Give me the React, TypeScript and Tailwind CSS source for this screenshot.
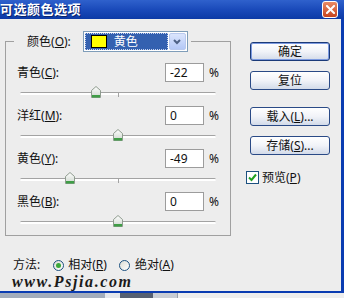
import React from "react";

type Row = { label: string; key: string; value: number };

const rows: Row[] = [
  { label: "青色", key: "C", value: -22 },
  { label: "洋红", key: "M", value: 0 },
  { label: "黄色", key: "Y", value: -49 },
  { label: "黑色", key: "B", value: 0 },
];

const font = "font-['Noto_Sans','Noto_Sans_CJK_SC',sans-serif]";

function Thumb() {
  return (
    <svg width="10" height="12" viewBox="0 0 10 12">
      <defs>
        <linearGradient id="thumbfill" x1="0" y1="0" x2="0" y2="1">
          <stop offset="0" stopColor="#ffffff" />
          <stop offset="1" stopColor="#cdd6cd" />
        </linearGradient>
      </defs>
      <path d="M5 0.5 L9.5 4.5 V11.5 H0.5 V4.5 Z" fill="url(#thumbfill)" stroke="#8f9c8f" />
      <rect x="1" y="9" width="8" height="2.5" fill="#3f9d46" />
    </svg>
  );
}

function Slider({ value }: { value: number }) {
  // track is 196px wide, -100..100 maps across it
  const left = 98 + (value / 100) * 98;
  return (
    <div className="relative h-[24px] ml-[3px] w-[196px] pt-[10px]">
      <div className="h-[3px] rounded-full border-t border-[#a3a3a3] bg-white" />
      <div className="absolute top-[11px] left-[98px] h-[4px] w-px bg-[#a3a3a3]" />
      <div className="absolute top-[4px]" style={{ left: Math.round(left - 5) }}>
        <Thumb />
      </div>
    </div>
  );
}

function Label({ text, k }: { text: string; k: string }) {
  return (
    <span>
      {text}(<span className="underline">{k}</span>):
    </span>
  );
}

function XpButton({ children, primary }: { children: React.ReactNode; primary?: boolean }) {
  return (
    <div
      className={`w-[80px] h-[19px] flex items-center justify-center rounded-[3px] border bg-gradient-to-b from-white via-[#f1f3f8] to-[#d3dbe9] ${
        primary
          ? "border-[#1b3a78] shadow-[inset_0_0_0_1px_#7c9ae0]"
          : "border-[#2a4a86]"
      }`}
    >
      {children}
    </div>
  );
}

function Radio({ checked }: { checked?: boolean }) {
  return (
    <span className="w-[11px] h-[11px] rounded-full border border-[#1c5180] bg-gradient-to-br from-[#dcdcd4] to-white flex items-center justify-center">
      {checked && <span className="w-[5px] h-[5px] rounded-full bg-[#3aa83a]" />}
    </span>
  );
}

export default function App() {
  return (
    <div className={`w-[344px] h-[298px] overflow-hidden flex flex-col bg-[#ededed] text-[12px] leading-none text-[#111] ${font}`}>
      {/* Title bar */}
      <div className="h-[19px] shrink-0 flex items-center justify-between pr-[6px] bg-gradient-to-b from-[#2f61cc] via-[#1a4aba] to-[#0c3aa6]">
        <span className="text-white font-bold text-[13px] tracking-[0.5px] [text-shadow:1px_1px_0_#0a246a]">
          可选颜色选项
        </span>
        <div className="w-[16px] h-[17px] rounded-[3px] border border-white bg-gradient-to-b from-[#e98a64] to-[#c6421c] flex items-center justify-center">
          <svg width="9" height="9" viewBox="0 0 9 9">
            <path d="M1 1 L8 8 M8 1 L1 8" stroke="white" strokeWidth="2" strokeLinecap="square" />
          </svg>
        </div>
      </div>

      {/* Body */}
      <div className="h-[272px] shrink-0 flex border-r-[3px] border-[#0a3cb2]">
        <div className="w-[231px] flex flex-col">
          <fieldset className="ml-[5px] mt-[12px] w-[226px] border border-[#a0a0a0]">
            <legend className="ml-[8px] pl-[13px] pr-[3px] flex items-center">
              <Label text="颜色" k="O" />
              <div className="ml-[12px] h-[21px] flex items-stretch border border-[#7f9db9] bg-white p-[1px]">
                <div className="w-[83px] flex items-center bg-[#3461b0] outline-1 outline-dotted outline-[#c8d4ee] -outline-offset-1 pl-[6px]">
                  <span className="w-[16px] h-[13px] bg-[#ffff00] border border-black" />
                  <span className="ml-[7px] text-white">黄色</span>
                </div>
                <div className="ml-[1px] w-[17px] rounded-[2px] border border-[#b9c9ee] bg-gradient-to-b from-[#dbe5fd] to-[#b4c8f6] flex items-center justify-center">
                  <svg width="8" height="6" viewBox="0 0 8 6">
                    <path d="M1 1 L4 4 L7 1" fill="none" stroke="#4d6185" strokeWidth="2" />
                  </svg>
                </div>
              </div>
            </legend>

            <div className="pl-[11px] mt-[11px]">
              {rows.map((r) => (
                <div key={r.key}>
                  <div className="flex items-center h-[19px]">
                    <span className="w-[148px]">
                      <Label text={r.label} k={r.key} />
                    </span>
                    <div className="w-[39px] h-[19px] border border-[#9c9c9c] bg-white flex items-center pl-[4px]">
                      {r.value}
                    </div>
                    <span className="ml-[5px]">%</span>
                  </div>
                  <Slider value={r.value} />
                </div>
              ))}
            </div>
          </fieldset>

          <div className="mt-[21px] ml-[13px] h-[16px] flex items-center">
            <span>方法:</span>
            <span className="ml-[13px]"><Radio checked /></span>
            <span className="ml-[4px]">
              相对(<span className="underline">R</span>)
            </span>
            <span className="ml-[12px]"><Radio /></span>
            <span className="ml-[5px]">
              绝对(<span className="underline">A</span>)
            </span>
          </div>

          <div className="ml-[12px] mt-[1px] font-['Liberation_Serif',serif] italic font-bold text-[16px] tracking-[1.6px] text-[#1a1a1a]">
            www.Psjia.com
          </div>
        </div>

        <div className="flex-1 pl-[19px] pt-[23px] flex flex-col">
          <XpButton primary>确定</XpButton>
          <div className="mt-[10px]">
            <XpButton>复位</XpButton>
          </div>
          <div className="mt-[17px]">
            <XpButton>
              载入(<span className="underline">L</span>)...
            </XpButton>
          </div>
          <div className="mt-[10px]">
            <XpButton>
              存储(<span className="underline">S</span>)...
            </XpButton>
          </div>
          <div className="mt-[16px] -ml-[4px] flex items-center">
            <span className="w-[13px] h-[13px] border border-[#1c5180] bg-white flex items-center justify-center">
              <svg width="9" height="9" viewBox="0 0 9 9">
                <path d="M1 4.5 L3.5 7 L8 1.5" fill="none" stroke="#21a121" strokeWidth="2" />
              </svg>
            </span>
            <span className="ml-[3px]">
              预览(<span className="underline">P</span>)
            </span>
          </div>
        </div>
      </div>

      <div className="h-[2px] shrink-0 bg-[#0a3cb2]" />
      <div className="flex-1 flex">
        <div className="w-[105px] bg-[#a3adbc]" />
        <div className="w-[15px] bg-[#e4e7ec]" />
        <div className="w-[33px] bg-[#566072]" />
        <div className="w-[24px] bg-[#c9cdd4]" />
        <div className="flex-1 border-l border-[#9aa0aa] bg-[#eeeeee]" />
      </div>
    </div>
  );
}
